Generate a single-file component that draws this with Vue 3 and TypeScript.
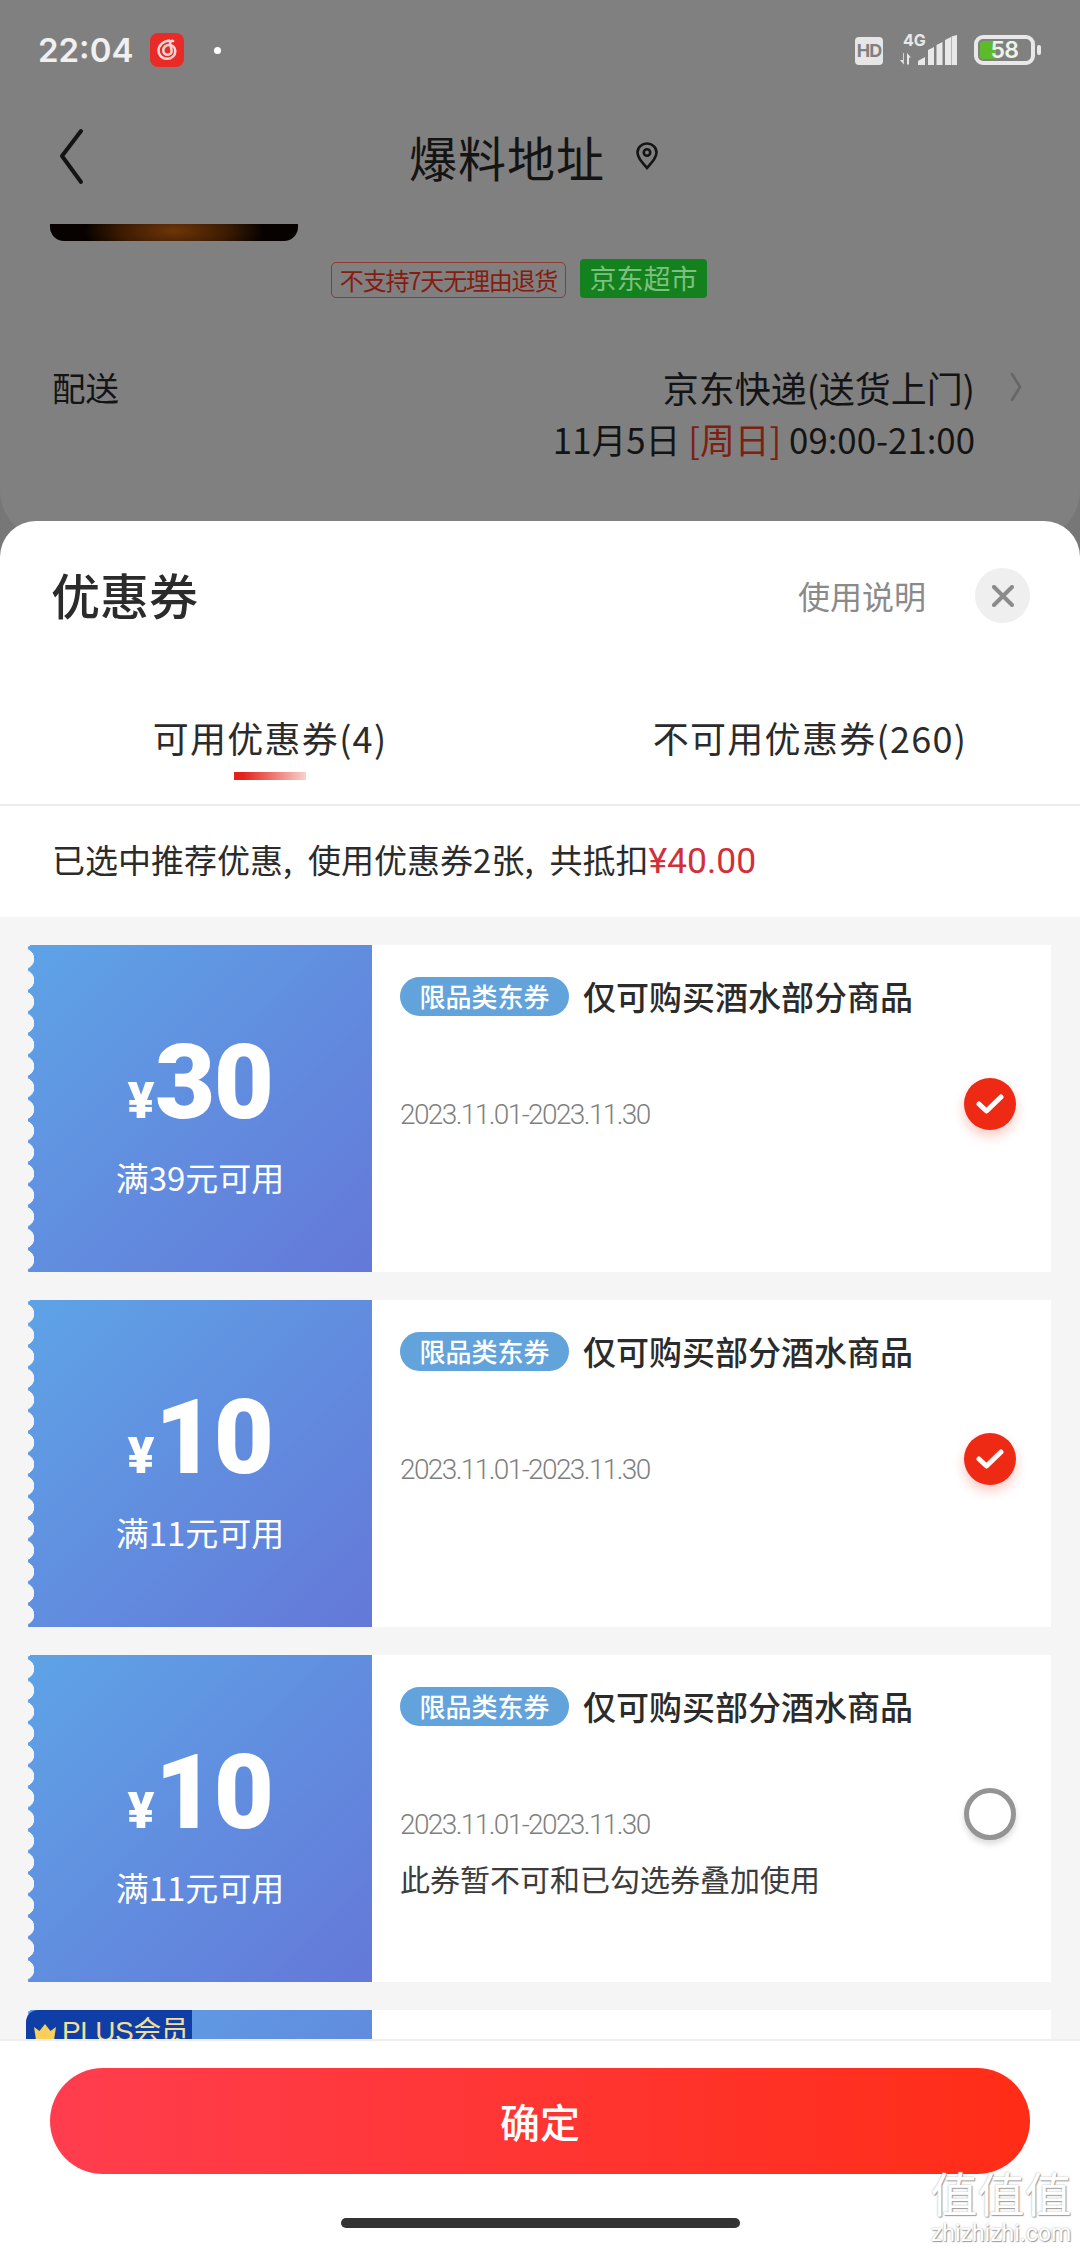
<script setup lang="ts">
interface Coupon {
  amount: string
  limit: string
  title: string
  checked: boolean
  note?: string
  plus?: boolean
}
const coupons: Coupon[] = [
  { amount: '30', limit: '满39元可用', title: '仅可购买酒水部分商品', checked: true },
  { amount: '10', limit: '满11元可用', title: '仅可购买部分酒水商品', checked: true },
  { amount: '10', limit: '满11元可用', title: '仅可购买部分酒水商品', checked: false, note: '此券暂不可和已勾选券叠加使用' },
  { amount: '10', limit: '满11元可用', title: '仅可购买部分酒水商品', checked: false, plus: true },
]
</script>

<template>
  <div class="screen">
    <div class="page">
      <div class="status">
        <div class="status-left">
          <span class="time">22:04</span>
          <span class="app-icon">
            <svg width="34" height="34" viewBox="0 0 34 34" fill="none" stroke="#f6d5d2" stroke-width="2.6" stroke-linecap="round">
              <path d="M19 7.500c-6 .6-10.500 4.800-10.500 10.300 0 4.700 3.700 8 8.500 8 4.700 0 8.300-3.300 8.300-7.500 0-3.800-2.800-6.300-6.300-6.300-3.200 0-5.700 2.300-5.700 5.200 0 2.700 2 4.600 4.400 4.600 2.300 0 3.900-1.700 3.900-3.800 0-2.500-1.200-5-1.600-7.300-.3-1.900 1-3.100 3.100-2.700" />
            </svg>
          </span>
          <span class="dot"></span>
        </div>
        <div class="status-right">
          <span class="hd">HD</span>
          <span class="signal">
            <span class="net">4G</span>
            <svg width="57" height="30" viewBox="0 0 57 30" fill="#e8e8e8">
              <path d="M3 18v7H0l3.800 4.500V18zM7 29.500V18l4 4.500H9v7z" />
              <path d="M18 30v-4l7-4v8zM28 30V15l6-3v18zM36.500 30V10l6-3v23zM45 30V5l6-3v28zM51.500 30V1.500L57 0v30z" />
            </svg>
          </span>
          <span class="battery">
            <span class="battery-body">
              <span class="battery-fill"></span>
              <span class="battery-text">58</span>
            </span>
            <span class="battery-tip"></span>
          </span>
        </div>
      </div>
      <div class="nav">
        <svg class="back" width="30" height="58" viewBox="0 0 30 58" fill="none" stroke="#141414" stroke-width="4" stroke-linecap="round" stroke-linejoin="round">
          <path d="M24 3 5 28l19 26" />
        </svg>
        <div class="nav-title">
          <span>爆料地址</span>
          <svg width="24" height="28" viewBox="0 0 24 28" fill="none" stroke="#141414" stroke-width="2.600">
            <path d="M12 26C6 19 2.500 15 2.500 10.500a9.500 9 0 0 1 19 0C21.500 15 18 19 12 26z" />
            <circle cx="12" cy="10.500" r="3.200" />
          </svg>
        </div>
      </div>
      <div class="product">
        <div class="thumb"></div>
        <div class="tags">
          <span class="tag-outline">不支持7天无理由退货</span>
          <span class="tag-green">京东超市</span>
        </div>
      </div>
      <div class="delivery">
        <span class="delivery-label">配送</span>
        <div class="delivery-right">
          <div class="delivery-line">
            <span>京东快递(送货上门)</span>
            <svg width="12" height="30" viewBox="0 0 12 30" fill="none" stroke="#666666" stroke-width="2.600" stroke-linecap="round">
              <path d="M2 2l8 13-8 13" />
            </svg>
          </div>
          <div class="delivery-date">11月5日 <em>[周日]</em> 09:00-21:00</div>
        </div>
      </div>
    </div>

    <div class="sheet">
      <div class="sheet-head">
        <span class="sheet-title">优惠券</span>
        <div class="sheet-actions">
          <span class="help">使用说明</span>
          <span class="close">
            <svg width="24" height="22" viewBox="0 0 24 22" fill="none" stroke="#8b8b8b" stroke-width="4" stroke-linecap="round">
              <path d="M3 2l18 18M21 2 3 20" />
            </svg>
          </span>
        </div>
      </div>
      <div class="tabs">
        <div class="tab active">
          <span>可用优惠券(4)</span>
          <i class="tab-line"></i>
        </div>
        <div class="tab">
          <span>不可用优惠券(260)</span>
        </div>
      </div>
      <div class="summary">已选中推荐优惠, 使用优惠券2张, 共抵扣<em>¥40.00</em></div>
      <div class="list">
        <div v-for="(c, i) in coupons" :key="i" class="coupon">
          <div class="coupon-left">
            <span v-if="c.plus" class="plus">
              <svg width="24" height="16" viewBox="0 0 24 16" fill="#f7cf5a">
                <path d="M1 3l5.500 4L12 0l5.500 7L23 3l-2 13H3z" />
              </svg>
              PLUS会员
            </span>
            <div class="amount"><small>¥</small>{{ c.amount }}</div>
            <div class="limit">{{ c.limit }}</div>
          </div>
          <div class="coupon-right">
            <div class="coupon-title">
              <span class="badge">限品类东券</span>
              <span class="coupon-name">{{ c.title }}</span>
            </div>
            <div class="coupon-date">2023.11.01-2023.11.30</div>
            <div v-if="c.note" class="coupon-note">{{ c.note }}</div>
            <span v-if="c.checked" class="check on">
              <svg width="30" height="20" viewBox="0 0 30 20" fill="none" stroke="#fff" stroke-width="5" stroke-linecap="round" stroke-linejoin="round">
                <path d="M4 10l7.500 7L26 3" />
              </svg>
            </span>
            <span v-else class="check off"></span>
          </div>
        </div>
      </div>
      <div class="footer">
        <div class="confirm">确定</div>
        <div class="home-bar"></div>
        <div class="watermark">
          <span class="wm-cn">值值值</span>
          <span class="wm-en">zhizhizhi.com</span>
        </div>
      </div>
    </div>
  </div>
</template>

<style>
html, body { margin: 0; padding: 0; }
</style>

<style scoped>
* { box-sizing: border-box; }
.screen {
  position: relative;
  width: 1080px;
  height: 2248px;
  overflow: hidden;
  background: #777777;
  font-family: "Noto Sans CJK SC", "Noto Sans", sans-serif;
  color: #141414;
}
em { font-style: normal; }
.page {
  height: 540px;
  background: #808080;
  border-radius: 0 0 50px 50px;
}
.status {
  height: 100px;
  padding: 29px 36px 0 38px;
  display: flex;
  justify-content: space-between;
  align-items: flex-start;
}
.status-left { display: flex; align-items: center; }
.time {
  font-family: Inter, Roboto, sans-serif;
  font-size: 33px;
  font-weight: 600;
  line-height: 42px;
  color: #f0f0f0;
  width: 112px;
}
.app-icon {
  width: 34px;
  height: 34px;
  border-radius: 8px;
  background: #ea2a26;
  display: flex;
}
.dot {
  width: 7px;
  height: 7px;
  margin-left: 30px;
  border-radius: 50%;
  background: #fff;
}
.status-right { display: flex; align-items: flex-end; height: 36px; margin-left: -3px; padding-right: 3px; }
.hd {
  width: 28px;
  height: 28px;
  border-radius: 4px;
  background: #e6e6e6;
  color: #808080;
  font-family: Inter, sans-serif;
  font-size: 18px;
  font-weight: 700;
  line-height: 28px;
  text-align: center;
  letter-spacing: -1px;
  margin-right: 17px;
}
.signal {
  position: relative;
  width: 57px;
  height: 30px;
  margin-right: 17px;
  display: flex;
  align-items: flex-end;
}
.net {
  position: absolute;
  left: 3px;
  top: -4px;
  font-family: Inter, sans-serif;
  font-size: 16px;
  line-height: 18px;
  font-weight: 700;
  color: #e8e8e8;
}
.battery { display: flex; align-items: center; }
.battery-body {
  position: relative;
  width: 61px;
  height: 30px;
  border: 4px solid #e8e8e8;
  border-radius: 9px;
  display: block;
}
.battery-fill {
  position: absolute;
  left: 2px;
  top: 2px;
  bottom: 2px;
  width: 16px;
  background: #5dbb2b;
  border-radius: 3px;
}
.battery-text {
  position: absolute;
  inset: 0;
  font-family: Inter, sans-serif;
  font-size: 23px;
  line-height: 22px;
  font-weight: 600;
  text-align: center;
  color: #edf5e6;
  letter-spacing: -0.5px;
}
.battery-tip {
  width: 4px;
  height: 10px;
  margin-left: 2px;
  border-radius: 2px;
  background: #e8e8e8;
}
.nav {
  position: relative;
  height: 124px;
  display: flex;
  align-items: center;
  justify-content: center;
}
.back { position: absolute; left: 57px; top: 28px; }
.nav-title {
  display: flex;
  align-items: center;
  gap: 30px;
  font-size: 48px;
  line-height: 60px;
  margin-top: -12px;
  margin-left: -12px;
}
.nav-title span { letter-spacing: 1px; }
.product { height: 76px; }
.thumb {
  width: 248px;
  height: 17px;
  margin-left: 50px;
  border-radius: 0 0 14px 14px;
  background: radial-gradient(ellipse 90px 30px at 50% 40%, #6e3608 0%, #3c1a02 60%, #070200 100%);
}
.tags {
  display: flex;
  align-items: flex-end;
  gap: 14px;
  margin: 18px 0 0 331px;
}
.tag-outline {
  height: 36px;
  width: 235px;
  border: 1px solid #8f3b30;
  border-radius: 5px;
  color: #861c10;
  font-size: 24px;
  line-height: 34px;
  text-align: center;
  white-space: nowrap;
  letter-spacing: -1.200px;
}
.tag-green {
  width: 127px;
  height: 39px;
  border-radius: 4px;
  background: #13811d;
  color: #7ec07f;
  font-size: 27px;
  line-height: 38px;
  text-align: center;
}
.delivery {
  display: flex;
  justify-content: space-between;
  padding: 61px 58px 0 52px;
  font-size: 36px;
  line-height: 52px;
}
.delivery-label { font-size: 33.500px; }
.delivery-right { text-align: right; }
.delivery-line {
  display: flex;
  align-items: center;
  justify-content: flex-end;
  gap: 35px;
}
.delivery-date {
  margin-right: 47px;
  font-size: 34.800px;
  line-height: 52px;
  color: #141414;
}
.delivery-date em { color: #7d2012; }

.sheet {
  position: absolute;
  left: 0;
  right: 0;
  top: 521px;
  bottom: 0;
  display: flex;
  flex-direction: column;
  background: #fff;
  border-radius: 36px 36px 0 0;
  overflow: hidden;
}
.sheet-head {
  flex: none;
  height: 152px;
  padding: 44px 50px 0 51px;
  display: flex;
  justify-content: space-between;
  align-items: flex-start;
}
.sheet-title {
  font-size: 49px;
  line-height: 58px;
  font-weight: 500;
  color: #2b2b2b;
}
.sheet-actions { display: flex; align-items: center; gap: 49px; margin-top: 3px; }
.help { font-size: 32px; line-height: 55px; color: #8a8a8a; }
.close {
  width: 55px;
  height: 55px;
  border-radius: 50%;
  background: #efefef;
  display: flex;
  align-items: center;
  justify-content: center;
}
.tabs {
  flex: none;
  height: 133px;
  display: flex;
  border-bottom: 2px solid #ececec;
}
.tab {
  position: relative;
  flex: 1;
  padding-top: 38px;
  text-align: center;
  font-size: 36px;
  line-height: 52px;
  letter-spacing: 1.300px;
  color: #2b2b2b;
}
.tab:first-child { flex: 0 0 540px; }
.tab-line {
  position: absolute;
  left: 234px;
  top: 99px;
  width: 72px;
  height: 8px;
  background: linear-gradient(90deg, #e2231a 0%, #e2231a 12%, #f9d1cd 100%);
}
.summary {
  flex: none;
  height: 111px;
  padding-left: 52px;
  font-size: 33px;
  line-height: 107px;
  word-spacing: 8.500px;
  color: #2b2b2b;
  white-space: nowrap;
}
.summary em {
  color: #d0303a;
  font-family: Roboto, sans-serif;
  font-size: 35.500px;
}
.list {
  flex: 1;
  min-height: 0;
  overflow: hidden;
  padding: 28px 29px 0 28px;
  background: #f5f5f5;
  display: flex;
  flex-direction: column;
  gap: 28px;
}
.coupon {
  flex: none;
  height: 327px;
  display: flex;
  background: #fff;
}
.coupon-left {
  position: relative;
  flex: 0 0 344px;
  display: flex;
  flex-direction: column;
  align-items: center;
  color: #fff;
  background-image:
    radial-gradient(circle at -4px 10.750px, #f5f5f5 0, #f5f5f5 10px, transparent 10.500px),
    linear-gradient(135deg, #5ea3e6 0%, #6478d8 100%);
  background-size: 8px 21.500px, 100% 100%;
  background-position: 0 3px, 0 0;
  background-repeat: repeat-y, no-repeat;
}
.amount {
  margin-top: 89px;
  height: 98px;
  font-family: Roboto, sans-serif;
  font-size: 104px;
  font-weight: 900;
  line-height: 98px;
  letter-spacing: -1.500px;
  white-space: nowrap;
}
.amount small {
  font-size: 50px;
  font-weight: 900;
  margin-right: 2px;
}
.limit {
  margin-top: 23px;
  font-size: 33px;
  line-height: 44px;
}
.plus {
  position: absolute;
  left: -2px;
  top: 0;
  width: 166px;
  height: 44px;
  padding-left: 7px;
  display: flex;
  align-items: center;
  gap: 5px;
  background: #0f3fa6;
  color: #efdf9b;
  font-family: "Liberation Sans", "Noto Sans CJK SC", sans-serif;
  font-size: 28px;
  line-height: 44px;
  letter-spacing: -0.500px;
  border-radius: 12px 0 0 0;
  white-space: nowrap;
}
.coupon-right {
  position: relative;
  flex: 1;
  padding: 31px 0 0 28px;
}
.coupon-title {
  display: flex;
  align-items: center;
  gap: 14px;
  height: 40px;
}
.badge {
  width: 169px;
  height: 39px;
  border-radius: 20px;
  background: #62a3dc;
  color: #fff;
  font-size: 26px;
  line-height: 38px;
  font-weight: 500;
  text-align: center;
  white-space: nowrap;
}
.coupon-name {
  font-size: 33px;
  line-height: 40px;
  font-weight: 500;
  color: #2b2b2b;
  white-space: nowrap;
}
.coupon-date {
  margin-top: 81px;
  font-family: Roboto, sans-serif;
  font-size: 28px;
  font-weight: 300;
  line-height: 36px;
  letter-spacing: -1.600px;
  color: #7f7f7f;
}
.coupon-note {
  margin-top: 15px;
  font-size: 30px;
  line-height: 40px;
  color: #3c3c3c;
}
.check {
  position: absolute;
  right: 35px;
  top: 133px;
  width: 52px;
  height: 52px;
  border-radius: 50%;
  display: flex;
  align-items: center;
  justify-content: center;
}
.check.on {
  background: #ee2a14;
  box-shadow: 0 6px 12px rgba(238, 42, 20, 0.25);
}
.check.off {
  border: 5px solid #949494;
  background: #fff;
  box-shadow: 0 4px 6px rgba(0, 0, 0, 0.15);
}
.footer {
  position: relative;
  flex: none;
  height: 209px;
  background: #fff;
  border-top: 2px solid #eeeeee;
  padding: 27px 50px 0;
}
.confirm {
  height: 106px;
  border-radius: 53px;
  background: linear-gradient(90deg, #ff3d4e 0%, #ff2d17 100%);
  color: #fff;
  font-size: 40px;
  font-weight: 500;
  line-height: 106px;
  text-align: center;
}
.home-bar {
  width: 399px;
  height: 10px;
  margin: 44px auto 0;
  border-radius: 5px;
  background: #333;
}
.watermark {
  position: absolute;
  right: 8px;
  bottom: 2px;
  width: 142px;
  display: flex;
  flex-direction: column;
  align-items: center;
  color: #fff;
  text-shadow: 0 0 2px #a8a8a8, 1px 1px 1px #999;
}
.wm-cn { font-size: 47px; line-height: 50px; margin-bottom: 5px; white-space: nowrap; }
.wm-en { font-family: Roboto, sans-serif; font-size: 23px; line-height: 24px; }
</style>
